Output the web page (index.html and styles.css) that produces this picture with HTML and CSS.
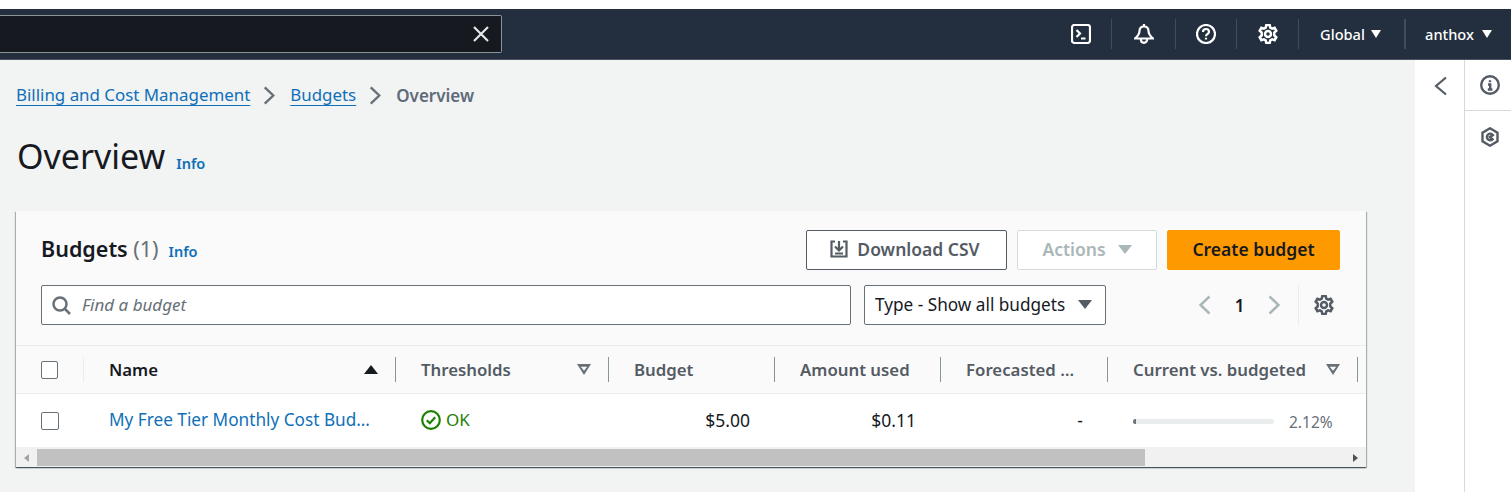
FILE: index.html

```html
<!doctype html>
<html lang="en">
  <head>
    <meta charset="UTF-8" />
    <meta name="viewport" content="width=device-width, initial-scale=1.0" />
    <title>Budgets - Overview</title>
    <link rel="stylesheet" href="styles.css">
  </head>
  <body>
    <header class="topbar">
      <div class="search-box">
        <svg class="icon-close" viewBox="0 0 16 16"><path d="M1 1l14 14M15 1L1 15" /></svg>
      </div>
      <nav class="top-nav">
        <div class="nav-item nav-first">
          <svg class="nav-icon" viewBox="0 0 20 20"><rect x="1" y="1" width="18" height="18" rx="2.5" /><path d="M5.500 6l3.500 3.500L5.500 13M10 14.500h4.500" /></svg>
        </div>
        <div class="nav-item nav-bell">
          <svg class="nav-icon" viewBox="0 0 20 20"><path d="M10 0v2.500M10 2.500c-3 0-4.500 2-4.500 4.500 0 3-1 4.500-4.500 7.500h18c-3.500-3-4.500-4.500-4.500-7.500 0-2.500-1.500-4.500-4.500-4.500zM6.800 15c0 2.300 1.400 3.800 3.200 3.800s3.200-1.500 3.200-3.800" /></svg>
        </div>
        <div class="nav-item nav-help">
          <svg class="nav-icon" viewBox="0 0 20 20"><circle cx="10" cy="10" r="9" /><path d="M7 8c0-2 1.300-3 3-3s3 1 3 2.800c0 2.400-3 2.400-3 4.400M10 13.800v1.800" /></svg>
        </div>
        <div class="nav-item nav-gear">
          <svg class="nav-icon nav-icon-gear" viewBox="0 0 20 20"><circle cx="10" cy="10" r="3" /><path d="M8.300 1h3.400l.6 2.600 1.800 1 2.500-.8 1.700 3-2 1.800v2.800l2 1.800-1.700 3-2.500-.8-1.800 1-.6 2.600H8.300l-.6-2.600-1.800-1-2.500.8-1.700-3 2-1.800V8.600l-2-1.800 1.700-3 2.500.8 1.800-1z" /></svg>
        </div>
        <div class="nav-item nav-menu nav-region">Global <span class="caret-white"></span></div>
        <div class="nav-item nav-menu nav-user">anthox <span class="caret-white"></span></div>
      </nav>
    </header>

    <div class="layout">
      <main class="content">
        <div class="breadcrumbs">
          <a class="crumb-link">Billing and Cost Management</a>
          <svg class="crumb-sep" viewBox="0 0 12 20"><path d="M1.500 1.500L10.500 10l-9 8.500" /></svg>
          <a class="crumb-link">Budgets</a>
          <svg class="crumb-sep" viewBox="0 0 12 20"><path d="M1.500 1.500L10.500 10l-9 8.500" /></svg>
          <span class="crumb-current">Overview</span>
        </div>

        <div class="page-title">
          <h1>Overview</h1>
          <a class="info-link">Info</a>
        </div>

        <section class="card">
          <div class="card-head">
            <div class="card-title-row">
              <h2>Budgets <span class="count">(1)</span></h2>
              <a class="info-link">Info</a>
              <div class="actions">
                <button class="btn btn-normal">
                  <svg class="btn-icon" viewBox="0 0 18 18"><path d="M5 1.500H1.500V16.500H16.500V1.500H13M9 1v9M5 6.500L9 10.500 13 6.500M5 13.500h8" /></svg>
                  Download CSV
                </button>
                <button class="btn btn-disabled">Actions <span class="caret-disabled"></span></button>
                <button class="btn btn-primary">Create budget</button>
              </div>
            </div>
            <div class="filter-row">
              <div class="find-box">
                <svg class="find-icon" viewBox="0 0 19 19"><circle cx="8" cy="8" r="6.500" /><path d="M12.500 12.500l5.500 5.500" /></svg>
                <span class="find-text">Find a budget</span>
              </div>
              <div class="type-select">Type - Show all budgets <span class="caret-dark"></span></div>
              <div class="pager">
                <svg class="pager-arrow" viewBox="0 0 12 20"><path d="M10.500 1.500L1.500 10l9 8.500" /></svg>
                <span class="pager-num">1</span>
                <svg class="pager-arrow" viewBox="0 0 12 20"><path d="M1.500 1.500L10.500 10l-9 8.500" /></svg>
              </div>
              <div class="prefs">
                <svg class="prefs-icon" viewBox="0 0 20 20"><circle cx="10" cy="10" r="3" /><path d="M8.300 1h3.400l.6 2.600 1.800 1 2.500-.8 1.700 3-2 1.800v2.800l2 1.800-1.700 3-2.500-.8-1.800 1-.6 2.600H8.300l-.6-2.600-1.800-1-2.500.8-1.700-3 2-1.800V8.600l-2-1.800 1.700-3 2.500.8 1.800-1z" /></svg>
              </div>
            </div>
          </div>

          <div class="row row-head">
            <div class="cell cell-check"><span class="checkbox"></span></div>
            <div class="cell th th-active">Name <span class="sort-up"></span></div>
            <div class="cell th">Thresholds <span class="sort-down"></span></div>
            <div class="cell th">Budget</div>
            <div class="cell th">Amount used</div>
            <div class="cell th">Forecasted …</div>
            <div class="cell th">Current vs. budgeted <span class="sort-down"></span></div>
          </div>

          <div class="row row-body">
            <div class="cell cell-check"><span class="checkbox"></span></div>
            <div class="cell cell-text"><a class="budget-link">My Free Tier Monthly Cost Bud…</a></div>
            <div class="cell cell-text status-ok">
              <svg class="ok-icon" viewBox="0 0 20 20"><circle cx="10" cy="10" r="8.800" /><path d="M5.800 10.200l3 3 5.400-6" /></svg>
              OK
            </div>
            <div class="cell cell-text cell-num">$5.00</div>
            <div class="cell cell-text cell-num">$0.11</div>
            <div class="cell cell-text cell-num">-</div>
            <div class="cell cell-progress">
              <div class="bar"><div class="bar-fill" style="width: 2.12%"></div></div>
              <span class="bar-label">2.12%</span>
            </div>
          </div>

          <div class="scrollbar">
            <span class="scroll-btn"><span class="arrow-left"></span></span>
            <div class="scroll-track"><div class="scroll-thumb"></div></div>
            <span class="scroll-btn"><span class="arrow-right"></span></span>
          </div>
        </section>
      </main>

      <aside class="side">
        <div class="side-toggle">
          <svg class="side-back" viewBox="0 0 14 20"><path d="M12 1.500L2 10l10 8.500" /></svg>
        </div>
        <div class="side-rail">
          <div class="rail-item">
            <svg class="rail-icon" viewBox="0 0 20 20"><circle cx="10" cy="10" r="8.800" /><path d="M8 9.500h2.200v5M7.800 14.500h4.600M10 5.200v2" /></svg>
          </div>
          <div class="rail-item">
            <svg class="rail-icon" viewBox="0 0 20 20"><path d="M10 1.300l7.500 4.300v8.800L10 18.700l-7.500-4.300V5.600z" /><path d="M12.500 12.300a3.300 3.300 0 1 1 .4-4.200L10 10z" /></svg>
          </div>
        </div>
      </aside>
    </div>
  </body>
</html>
```

FILE: styles.css

```css
* {
  box-sizing: border-box;
}

html,
body {
  height: 100%;
  overflow: hidden;
}

body {
  margin: 0;
  padding-top: 9px;
  background-color: #fff;
  color: #16191f;
  font-family: "Noto Sans", "Open Sans", sans-serif;
  font-size: 17px;
}

h1,
h2 {
  margin: 0;
  font-weight: 400;
}

a {
  color: #0f6fb8;
}

svg {
  display: block;
  fill: none;
  stroke: currentColor;
}

/* top bar */
.topbar {
  display: flex;
  justify-content: space-between;
  align-items: center;
  height: 51px;
  background-color: #232f3e;
  border-bottom: 1px solid #4a5462;
}

.search-box {
  display: flex;
  justify-content: flex-end;
  align-items: center;
  width: 502px;
  height: 38px;
  margin-top: -1px;
  padding-right: 12px;
  background-color: #16191f;
  border: 1px solid #879596;
  border-left: none;
  border-radius: 0 2px 2px 0;
}

.icon-close {
  width: 16px;
  height: 16px;
  color: #e4e6e8;
  stroke-width: 2.200;
}

.top-nav {
  display: flex;
  align-items: center;
  height: 30px;
  color: #fff;
}

.nav-item {
  display: flex;
  justify-content: center;
  align-items: center;
  height: 30px;
  border-left: 1px solid #414b59;
}

.nav-first {
  width: 61px;
  border-left: none;
}

.nav-bell {
  width: 64px;
}

.nav-help {
  width: 61px;
}

.nav-gear {
  width: 62px;
}

.nav-icon {
  width: 20px;
  height: 20px;
  stroke-width: 2.200;
}

.nav-icon-gear {
  stroke-width: 2.500;
}

.nav-menu {
  gap: 6px;
  font-size: 14.600px;
  font-weight: 500;
}

.nav-region {
  width: 106px;
  padding-right: 2px;
}

.nav-user {
  gap: 8px;
  width: 107px;
  border-left: 2px solid #414b59;
}

.caret-white {
  width: 0;
  height: 0;
  border-left: 5.500px solid transparent;
  border-right: 5.500px solid transparent;
  border-top: 8px solid #fff;
}

/* page */
.layout {
  display: flex;
  height: 432px;
}

.content {
  flex: 1;
  padding: 23px 49px 0 16px;
  background-color: #f2f3f3;
}

.breadcrumbs {
  display: flex;
  align-items: center;
  height: 24px;
}

.crumb-link {
  font-size: 16.900px;
  line-height: 24px;
  text-decoration: underline;
  text-underline-offset: 4px;
  text-decoration-thickness: 1px;
}

.crumb-sep {
  width: 12px;
  height: 19px;
  margin: 0 15px 0 13px;
  color: #687078;
  stroke-width: 2.500;
}

.crumb-current {
  color: #5f6b7a;
  font-size: 17px;
  font-weight: 600;
}

.page-title {
  display: flex;
  align-items: baseline;
  gap: 11px;
  height: 50px;
  margin: 24px 0 30px 1px;
}

.page-title h1 {
  font-size: 34px;
  line-height: 50px;
}

.info-link {
  color: #0f6fb8;
  font-size: 14.500px;
  font-weight: 600;
}

/* card */
.card {
  width: 1350px;
  background-color: #fff;
  box-shadow: 0 1px 1px 0 rgba(0, 28, 36, 0.5), 1px 1px 1px 0 rgba(0, 28, 36, 0.25), -1px 1px 1px 0 rgba(0, 28, 36, 0.25);
}

.card-head {
  padding: 19px 26px 20px 25px;
  background-color: #fafafa;
}

.card-title-row {
  display: flex;
  align-items: center;
  height: 40px;
}

.card-title-row h2 {
  margin-bottom: 3px;
  font-size: 21.500px;
  font-weight: 600;
  line-height: 28px;
}

.count {
  color: #687078;
  font-weight: 400;
}

.card-title-row .info-link {
  margin-left: 10px;
  padding-top: 1px;
}

.actions {
  display: flex;
  gap: 10px;
  margin-left: auto;
}

.btn {
  display: flex;
  justify-content: center;
  align-items: center;
  height: 40px;
  padding: 0 0 2px;
  border-radius: 2px;
  font-family: inherit;
  font-size: 17.500px;
  font-weight: 600;
}

.btn-normal {
  gap: 9px;
  width: 201px;
  padding-right: 3px;
  background-color: #fff;
  border: 1px solid #545b64;
  color: #545b64;
}

.btn-icon {
  width: 18px;
  height: 18px;
  stroke-width: 2.200;
}

.btn-disabled {
  gap: 12px;
  width: 140px;
  background-color: #fff;
  border: 1px solid #d5dbdb;
  color: #aab7b8;
}

.caret-disabled {
  width: 0;
  height: 0;
  border-left: 7px solid transparent;
  border-right: 7px solid transparent;
  border-top: 9px solid #aab7b8;
}

.btn-primary {
  width: 173px;
  background-color: #ff9900;
  border: 1px solid #ff9900;
  color: #16191f;
}

.filter-row {
  display: flex;
  align-items: center;
  height: 40px;
  margin-top: 15px;
}

.find-box {
  display: flex;
  align-items: center;
  gap: 11px;
  width: 810px;
  height: 40px;
  padding-left: 10px;
  background-color: #fff;
  border: 1px solid #687078;
  border-radius: 2px;
  color: #687078;
  font-style: italic;
}

.find-text {
  margin-bottom: 2px;
}

.find-icon {
  width: 19px;
  height: 19px;
  color: #687078;
  stroke-width: 2.500;
}

.type-select {
  display: flex;
  justify-content: space-between;
  align-items: center;
  width: 242px;
  height: 40px;
  margin-left: 13px;
  padding: 0 13px 2px 10px;
  background-color: #fff;
  border: 1px solid #687078;
  border-radius: 2px;
  font-size: 17.200px;
}

.caret-dark {
  width: 0;
  height: 0;
  border-left: 7px solid transparent;
  border-right: 7px solid transparent;
  border-top: 9px solid #545b64;
}

.pager {
  display: flex;
  align-items: center;
  margin-left: 93px;
}

.pager-arrow {
  width: 12px;
  height: 20px;
  color: #aab7b8;
  stroke-width: 2.500;
}

.pager-num {
  width: 57px;
  font-weight: 600;
  text-align: center;
}

.prefs {
  display: flex;
  align-items: center;
  height: 40px;
  margin-left: 18px;
  padding-left: 15px;
  border-left: 1px solid #eaeded;
}

.prefs-icon {
  width: 20px;
  height: 20px;
  color: #545b64;
  stroke-width: 2.500;
}

/* table */
.row {
  display: grid;
  grid-template-columns: 68px 312px 213px 166px 166px 167px 258px;
}

.cell {
  display: flex;
  align-items: center;
  min-width: 0;
  padding: 0 25px;
}

.checkbox {
  width: 18px;
  height: 18px;
  background-color: #fff;
  border: 1px solid #687078;
  border-radius: 2px;
}

.row-head {
  height: 49px;
  background-color: #fafafa;
  border-top: 1px solid #eaeded;
  border-bottom: 1px solid #eaeded;
}

.row-head .cell {
  height: 25px;
  margin-top: 11px;
  border-right: 1px solid #879596;
}

.row-head .cell-check {
  border-right-color: #eaeded;
}

.th {
  justify-content: space-between;
  color: #545b64;
  font-size: 16.800px;
  font-weight: 600;
  white-space: nowrap;
}

.row-head .th {
  padding-right: 17px;
}

.th-active {
  color: #16191f;
}

.th:last-child {
  width: 250px;
}

.sort-up {
  width: 0;
  height: 0;
  border-left: 7px solid transparent;
  border-right: 7px solid transparent;
  border-bottom: 9px solid #16191f;
}

.sort-down {
  width: 14px;
  height: 11px;
  background-color: #687078;
  clip-path: polygon(0 0, 100% 0, 50% 100%, 0 0, 27% 26%, 50% 62%, 73% 26%, 27% 26%);
}

.row-body {
  height: 53px;
  background-color: #fff;
}

.cell-text {
  padding-bottom: 2px;
}

.budget-link {
  font-size: 17.200px;
  white-space: nowrap;
}

.status-ok {
  gap: 5px;
  color: #1d8102;
}

.ok-icon {
  width: 20px;
  height: 20px;
  flex: none;
  stroke-width: 2.200;
}

.cell-num {
  justify-content: flex-end;
  font-size: 17.500px;
}

.cell-progress {
  gap: 15px;
  padding-top: 2px;
  padding-right: 0;
}

.bar {
  width: 141px;
  height: 5px;
  overflow: hidden;
  background-color: #eaeded;
  border-radius: 3px;
}

.bar-fill {
  height: 100%;
  background-color: #687078;
}

.bar-label {
  color: #687078;
  font-size: 15.500px;
}

/* horizontal scrollbar */
.scrollbar {
  display: flex;
  height: 20px;
  padding-top: 2px;
  background-color: #f1f1f1;
}

.scroll-btn {
  display: flex;
  flex: none;
  justify-content: center;
  align-items: center;
  width: 21px;
  height: 17px;
}

.arrow-left,
.arrow-right {
  width: 0;
  height: 0;
  border-top: 4px solid transparent;
  border-bottom: 4px solid transparent;
}

.arrow-left {
  border-right: 5px solid #a3a3a3;
}

.arrow-right {
  border-left: 5px solid #505050;
}

.scroll-track {
  flex: 1;
}

.scroll-thumb {
  width: 1108px;
  height: 17px;
  background-color: #c1c1c1;
}

/* right panel */
.side {
  display: flex;
  width: 96px;
  background-color: #fff;
}

.side-toggle {
  width: 49px;
  padding: 16px 0 0 19px;
}

.side-back {
  width: 14px;
  height: 20px;
  color: #545b64;
  stroke-width: 2.200;
}

.side-rail {
  width: 47px;
  border-left: 1px solid #d5dbdb;
}

.rail-item {
  display: flex;
  justify-content: center;
  align-items: center;
  height: 51px;
  padding-left: 4px;
  border-bottom: 1px solid #d5dbdb;
}

.rail-item:last-child {
  border-bottom: none;
}

.rail-icon {
  width: 20px;
  height: 20px;
  color: #545b64;
  stroke-width: 2.400;
}
```
